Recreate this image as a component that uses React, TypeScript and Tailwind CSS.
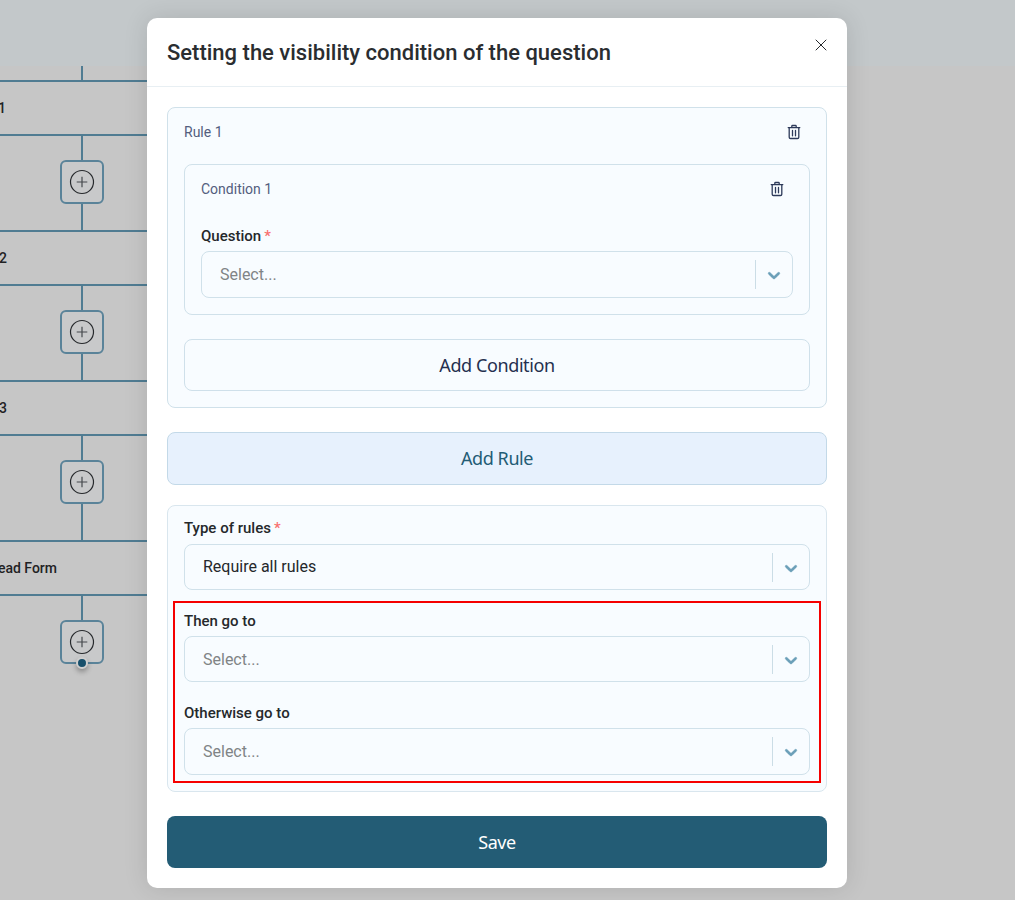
import { X } from "lucide-react";

const ROBOTO = "font-['Roboto','Liberation_Sans',sans-serif]";

function TrashIcon() {
  return (
    <svg width="16" height="16" viewBox="0 0 16 16" fill="none" stroke="#2d3a5a" strokeWidth="1.3" strokeLinecap="round" strokeLinejoin="round">
      <path d="M2.2 3.6h11.6" />
      <path d="M5.8 3.4V2.2c0-.4.3-.7.7-.7h3c.4 0 .7.3.7.7v1.2" />
      <path d="M3.2 3.8v9.4c0 .8.6 1.3 1.3 1.3h7c.7 0 1.3-.5 1.3-1.3V3.8" />
      <path d="M6.5 6.4v5.4M9.5 6.4v5.4" />
    </svg>
  );
}

function Chevron() {
  return (
    <svg width="20" height="20" viewBox="0 0 20 20" fill="#6b9fb8" stroke="#6b9fb8" strokeWidth="0.4">
      <path d="M4.516 7.548c0.436-0.446 1.043-0.481 1.576 0l3.908 3.747 3.908-3.747c0.533-0.481 1.141-0.446 1.574 0 0.436 0.445 0.408 1.197 0 1.615-0.406 0.418-4.695 4.502-4.695 4.502-0.217 0.223-0.502 0.335-0.787 0.335s-0.57-0.112-0.789-0.335c0 0-4.287-4.084-4.695-4.502s-0.436-1.17 0-1.615z" />
    </svg>
  );
}

function Select({ value, height = "h-[46px]", nudge }: { value?: string; height?: string; nudge?: boolean }) {
  return (
    <div className={`flex ${height} items-center rounded-lg border border-[#d0e1ea] bg-[#f8fcff]`}>
      <span className={`flex-1 pl-[18px] text-[16px] ${nudge ? "pt-[2px]" : ""} ${value ? "text-[#25282b]" : "text-[#808486]"}`}>
        {value ?? "Select..."}
      </span>
      <span className="h-[29px] w-px bg-[#cbdde6]" />
      <span className="flex w-[36px] items-center justify-center pt-px">
        <Chevron />
      </span>
    </div>
  );
}

function Label({ text, required }: { text: string; required?: boolean }) {
  return (
    <div className="text-[15px] font-medium leading-[20px] text-[#25282b]">
      {text}
      {required && <span className="ml-[3px] text-[#f87070]">*</span>}
    </div>
  );
}

function FlowNode({ label, width }: { label: string; width: string }) {
  return (
    <div className="flex h-[56px] items-center border-y-2 border-[#507c92]">
      <div className={`flex ${width} justify-end whitespace-nowrap text-[14px] font-medium text-[#1f2224]`}>
        {label}
      </div>
    </div>
  );
}

function Stem({ height }: { height: string }) {
  return <div className={`ml-[81px] w-[2px] bg-[#507c92] ${height}`} />;
}

function AddButton({ dot }: { dot?: boolean }) {
  return (
    <div className="relative ml-[60px] flex h-[44px] w-[44px] items-center justify-center rounded-md border-2 border-[#5a8399] bg-[#c8c9ca]">
      <svg width="26" height="26" viewBox="0 0 26 26" fill="none">
        <circle cx="13" cy="13" r="11.5" stroke="#26292c" strokeWidth="1.2" />
        <path d="M13 7.7v10.6M7.7 13h10.6" stroke="#45494c" strokeWidth="1.2" />
      </svg>
      {dot && (
        <span className="absolute -bottom-[7px] left-1/2 h-[12px] w-[12px] -translate-x-1/2 rounded-full border-[2px] border-[#cfcfcf] bg-[#174f6b] shadow-[0_3px_5px_rgba(0,0,0,0.3)]" />
      )}
    </div>
  );
}

export default function App() {
  return (
    <div className={`relative h-[900px] overflow-hidden bg-[#c6c6c6] ${ROBOTO}`}>
      <div className="h-[66px] bg-[#c3c8ca]" />

      {/* flow canvas behind the overlay */}
      <div className="w-[147px]">
        <Stem height="h-[14px]" />
        <FlowNode label="1" width="w-[6px]" />
        <Stem height="h-[24px]" />
        <AddButton />
        <Stem height="h-[26px]" />
        <FlowNode label="2" width="w-[7px]" />
        <Stem height="h-[24px]" />
        <AddButton />
        <Stem height="h-[26px]" />
        <FlowNode label="3" width="w-[7px]" />
        <Stem height="h-[24px]" />
        <AddButton />
        <Stem height="h-[36px]" />
        <FlowNode label="Lead Form" width="w-[57px]" />
        <Stem height="h-[24px]" />
        <AddButton dot />
      </div>

      {/* modal */}
      <div className="absolute left-[147px] top-[18px] h-[870px] w-[700px] rounded-[10px] bg-white shadow-[0_0_24px_rgba(0,0,0,0.12)]">
        <div className="flex h-[69px] items-center justify-between border-b border-[#e8eff3] pl-5 pr-[16px]">
          <h1 className="text-[22px] font-medium text-[#2a2d30]">Setting the visibility condition of the question</h1>
          <X size={20} strokeWidth={1.2} className="-mt-[14px] text-[#25282b]" />
        </div>

        <div className="px-5 pt-5">
          <div className="h-[301px] rounded-lg border border-[#d0e1ea] bg-[#f8fcff] px-4">
            <div className="mb-[2px] flex h-[54px] items-center justify-between pb-[6px] pr-[8px]">
              <span className="text-[14px] text-[#535e7e]">Rule 1</span>
              <TrashIcon />
            </div>
            <div className="h-[151px] rounded-lg border border-[#d0e1ea] px-4">
              <div className="flex h-[48px] items-center justify-between pr-[8px]">
                <span className="text-[14px] text-[#535e7e]">Condition 1</span>
                <TrashIcon />
              </div>
              <div className="mb-[5px] mt-[13px]">
                <Label text="Question" required />
              </div>
              <Select height="h-[47px]" />
            </div>
            <button className="mt-6 flex h-[52px] w-full items-center justify-center rounded-lg border border-[#cfe0ea] font-['Noto_Sans',sans-serif] text-[18px] tracking-[-0.4px] text-[#25304f]">
              Add Condition
            </button>
          </div>

          <button className="mt-6 flex h-[53px] w-full items-center justify-center rounded-lg border border-[#c3d9e8] bg-[#e7f1fd] font-['Noto_Sans',sans-serif] text-[18px] tracking-[-0.4px] text-[#235c75]">
            Add Rule
          </button>

          <div className="mt-5 h-[287px] rounded-lg border border-[#d9e6ee] bg-[#f8fcff] px-4 pt-[12px]">
            <div className="mb-[6px]">
              <Label text="Type of rules" required />
            </div>
            <Select value="Require all rules" />
            <div className="-mx-[11px] mt-[11px] h-[182px] border-2 border-[#f50000] px-[9px] pt-[8px]">
              <div className="mb-[5px]">
                <Label text="Then go to" />
              </div>
              <Select nudge />
              <div className="mb-[5px] mt-[21px]">
                <Label text="Otherwise go to" />
              </div>
              <Select height="h-[47px]" />
            </div>
          </div>

          <button className="mt-6 flex h-[52px] w-full items-center justify-center rounded-lg bg-[#235c75] font-['Noto_Sans',sans-serif] text-[18px] tracking-[-0.4px] text-white">
            Save
          </button>
        </div>
      </div>
    </div>
  );
}
